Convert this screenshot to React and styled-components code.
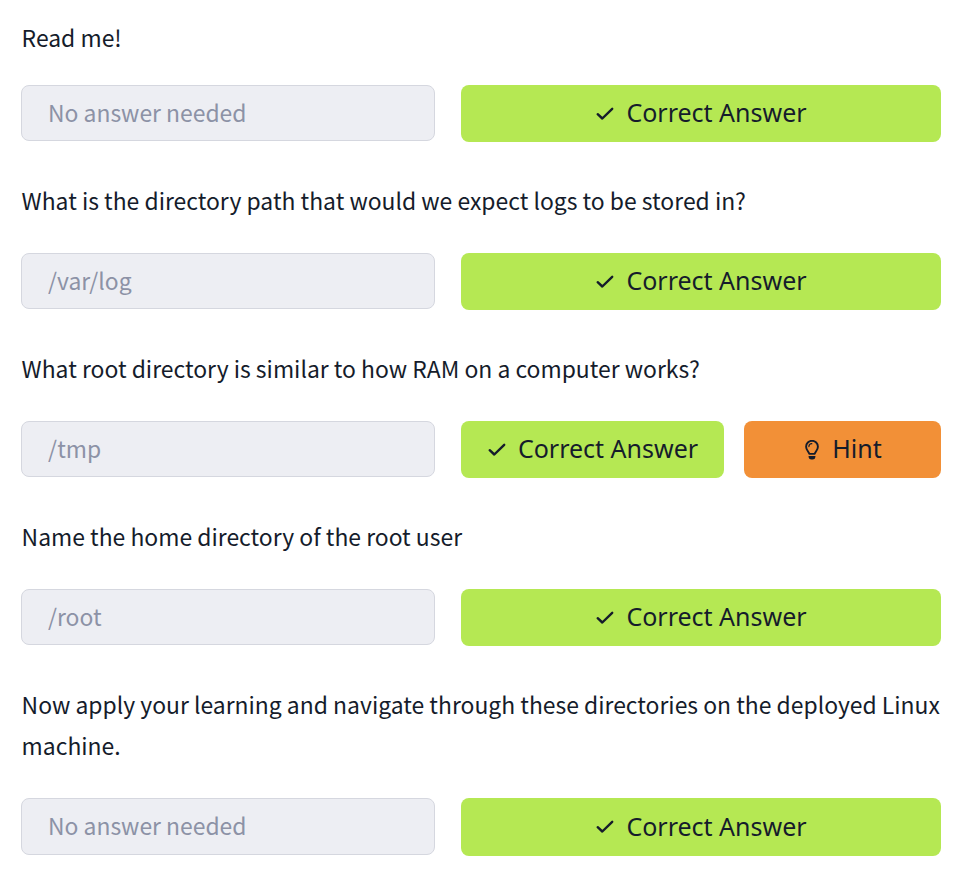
import React from "react";
import styled, { createGlobalStyle } from "styled-components";

const GlobalStyle = createGlobalStyle`
  * { box-sizing: border-box; }
  body { margin: 0; background: #fff; }
`;

const Page = styled.main`
  width: 972px;
  height: 870px;
  padding: 17px 31px 0 21px;
  overflow: hidden;
  background: #fff;
  color: #151c2b;
  font-family: "Noto Sans CJK SC", sans-serif;
`;

const Task = styled.section`
  margin-bottom: 38px;
`;

const Question = styled.p`
  margin: 0 -4px ${(p) => p.$gap}px 0.6px;
  font-size: 22.91px;
  line-height: 41px;
`;

const AnswerRow = styled.div`
  display: grid;
  grid-template-columns: 414px 480px;
  column-gap: 26px;
  align-items: start;
`;

const AnswerInput = styled.input`
  width: 100%;
  height: ${(p) => p.$height}px;
  padding: 0 26px ${(p) => p.$height - 54}px;
  border: 1px solid #d5d7df;
  border-radius: 8px;
  background: #edeef3;
  font: 22.9px "Noto Sans CJK SC", sans-serif;
  color: #8c92a6;
  &::placeholder { color: #8c92a6; opacity: 1; }
`;

const Actions = styled.div`
  display: flex;
  gap: 20px;
`;

const Button = styled.button`
  display: flex;
  flex: ${(p) => (p.$hint ? "0 0 197px" : "1")};
  align-items: center;
  justify-content: center;
  gap: ${(p) => (p.$hint ? 13 : 11)}px;
  height: ${(p) => p.$height}px;
  padding: 0 0 0 ${(p) => (p.$hint ? 2 : 0)}px;
  border: 0;
  border-radius: 8px;
  background: ${(p) => (p.$hint ? "#f29037" : "#b5e853")};
  color: #151c2b;
  font: 25px "Noto Sans", sans-serif;
  white-space: nowrap;
`;

const ButtonText = styled.span`
  padding-bottom: 3px;
`;

const CheckIcon = () => (
  <svg width="20" height="20" viewBox="0 0 20 20" fill="none" stroke="currentColor" strokeWidth="2.4" strokeLinecap="round" strokeLinejoin="round">
    <path d="M2.7 10.2 7.3 14.5 17.2 4.8" />
  </svg>
);

const BulbIcon = () => (
  <svg width="14" height="20" viewBox="0 0 14 20" fill="none" stroke="currentColor" strokeLinecap="round">
    <path d="M4.3 13.9C3.9 11.8 1.1 10.3 1.1 6.7a5.9 5.9 0 0 1 11.8 0c0 3.6-2.8 5.1-3.2 7.2Z" strokeWidth="1.9" strokeLinejoin="round" />
    <path d="M3.9 6.6c0-1.7 1.2-2.9 2.9-2.9" strokeWidth="1.2" />
    <path d="M3.6 15.9h6.8v.7a2.9 2.9 0 0 1-2.9 2.9h-1a2.9 2.9 0 0 1-2.9-2.9Z" fill="currentColor" stroke="none" />
  </svg>
);

const tasks = [
  { question: "Read me!", placeholder: "No answer needed", gap: 27 },
  { question: "What is the directory path that would we expect logs to be stored in?", placeholder: "/var/log" },
  { question: "What root directory is similar to how RAM on a computer works?", placeholder: "/tmp", hint: true },
  { question: "Name the home directory of the root user", placeholder: "/root" },
  {
    question: "Now apply your learning and navigate through these directories on the deployed Linux machine.",
    placeholder: "No answer needed",
    height: 57,
  },
];

export default function App() {
  return (
    <>
      <GlobalStyle />
      <Page>
        {tasks.map(({ question, placeholder, hint, gap = 32, height = 56 }) => (
          <Task key={question}>
            <Question $gap={gap}>{question}</Question>
            <AnswerRow>
              <AnswerInput $height={height} placeholder={placeholder} disabled />
              <Actions>
                <Button $height={height + 1}>
                  <CheckIcon />
                  <ButtonText>Correct Answer</ButtonText>
                </Button>
                {hint && (
                  <Button $hint $height={height + 1}>
                    <BulbIcon />
                    <ButtonText>Hint</ButtonText>
                  </Button>
                )}
              </Actions>
            </AnswerRow>
          </Task>
        ))}
      </Page>
    </>
  );
}
